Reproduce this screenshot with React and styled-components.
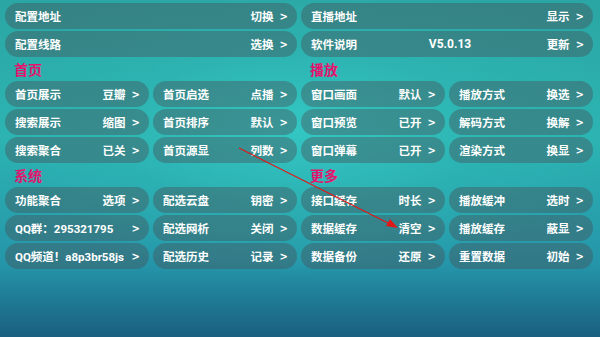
import React from "react";
import styled, { createGlobalStyle } from "styled-components";

const Global = createGlobalStyle`
  html, body { margin: 0; padding: 0; }
  body {
    width: 600px; height: 337px; overflow: hidden;
    font-family: "Noto Sans CJK SC", "Noto Sans", sans-serif;
  }
`;

const Screen = styled.div`
  position: relative;
  width: 600px;
  height: 337px;
  box-sizing: border-box;
  padding: 3px 7px 0 5px;
  background:
    radial-gradient(ellipse 70% 55% at 50% 38%, rgba(52, 200, 196, 0.9) 0%, rgba(46, 184, 182, 0.5) 45%, rgba(46, 184, 182, 0) 80%),
    linear-gradient(180deg, #2aa6a4 0%, #2cb3b1 40%, #2596aa 78%, #1a5f7f 100%);
`;

const Grid = styled.div`
  display: grid;
  grid-template-columns: repeat(4, minmax(0, 1fr));
  column-gap: 4px;
  row-gap: 2px;
`;

const Header = styled.div`
  grid-column: span 2;
  height: 20px;
  padding-left: 9px;
  display: flex;
  align-items: center;
  color: #e4136d;
  font-size: 14px;
  font-weight: 700;
  line-height: 1;
`;

const Item = styled.div`
  grid-column: span ${(p) => (p.$wide ? 2 : 1)};
  height: 26px;
  display: flex;
  align-items: center;
  box-sizing: border-box;
  padding: 0 9px 0 10px;
  border-radius: 13px;
  background: rgba(70, 80, 88, 0.42);
  color: #ffffff;
  font-family: "Roboto", "Noto Sans CJK SC", sans-serif;
  font-size: 11.5px;
  font-weight: 700;
  white-space: nowrap;
  overflow: hidden;
`;

const Label = styled.span`
  flex: 1;
  min-width: 0;
`;

const Center = styled.span`
  flex: 1;
  text-align: left;
  font-size: 12px;
`;

const Value = styled.span``;

const Chevron = styled.span`
  margin-left: 6px;
  font-family: "DejaVu Sans", sans-serif;
  font-size: 10px;
  font-weight: 700;
`;

const Arrow = styled.svg`
  position: absolute;
  left: 0;
  top: 0;
  pointer-events: none;
`;

const Row = ({ wide, label, value, center }) => (
  <Item $wide={wide}>
    <Label>{label}</Label>
    {center && <Center>{center}</Center>}
    {value && <Value>{value}</Value>}
    <Chevron>&gt;</Chevron>
  </Item>
);

export default function App() {
  return (
    <Screen>
      <Global />
      <Grid>
        <Row wide label="配置地址" value="切换" />
        <Row wide label="直播地址" value="显示" />
        <Row wide label="配置线路" value="选换" />
        <Row wide label="软件说明" value="更新" center="V5.0.13" />

        <Header>首页</Header>
        <Header>播放</Header>
        <Row label="首页展示" value="豆瓣" />
        <Row label="首页启选" value="点播" />
        <Row label="窗口画面" value="默认" />
        <Row label="播放方式" value="换选" />
        <Row label="搜索展示" value="缩图" />
        <Row label="首页排序" value="默认" />
        <Row label="窗口预览" value="已开" />
        <Row label="解码方式" value="换解" />
        <Row label="搜索聚合" value="已关" />
        <Row label="首页源显" value="列数" />
        <Row label="窗口弹幕" value="已开" />
        <Row label="渲染方式" value="换显" />

        <Header>系统</Header>
        <Header>更多</Header>
        <Row label="功能聚合" value="选项" />
        <Row label="配选云盘" value="钥密" />
        <Row label="接口缓存" value="时长" />
        <Row label="播放缓冲" value="选时" />
        <Row label="QQ群：295321795" />
        <Row label="配选网析" value="关闭" />
        <Row label="数据缓存" value="清空" />
        <Row label="播放缓存" value="蔽显" />
        <Row label="QQ频道！a8p3br58js" />
        <Row label="配选历史" value="记录" />
        <Row label="数据备份" value="还原" />
        <Row label="重置数据" value="初始" />
      </Grid>
      <Arrow width="600" height="337" viewBox="0 0 600 337">
        <line x1="239" y1="148" x2="392" y2="225" stroke="#e01818" strokeWidth="1.2" />
        <polygon points="398,228 386,226 390,219" fill="#e01818" />
      </Arrow>
    </Screen>
  );
}
